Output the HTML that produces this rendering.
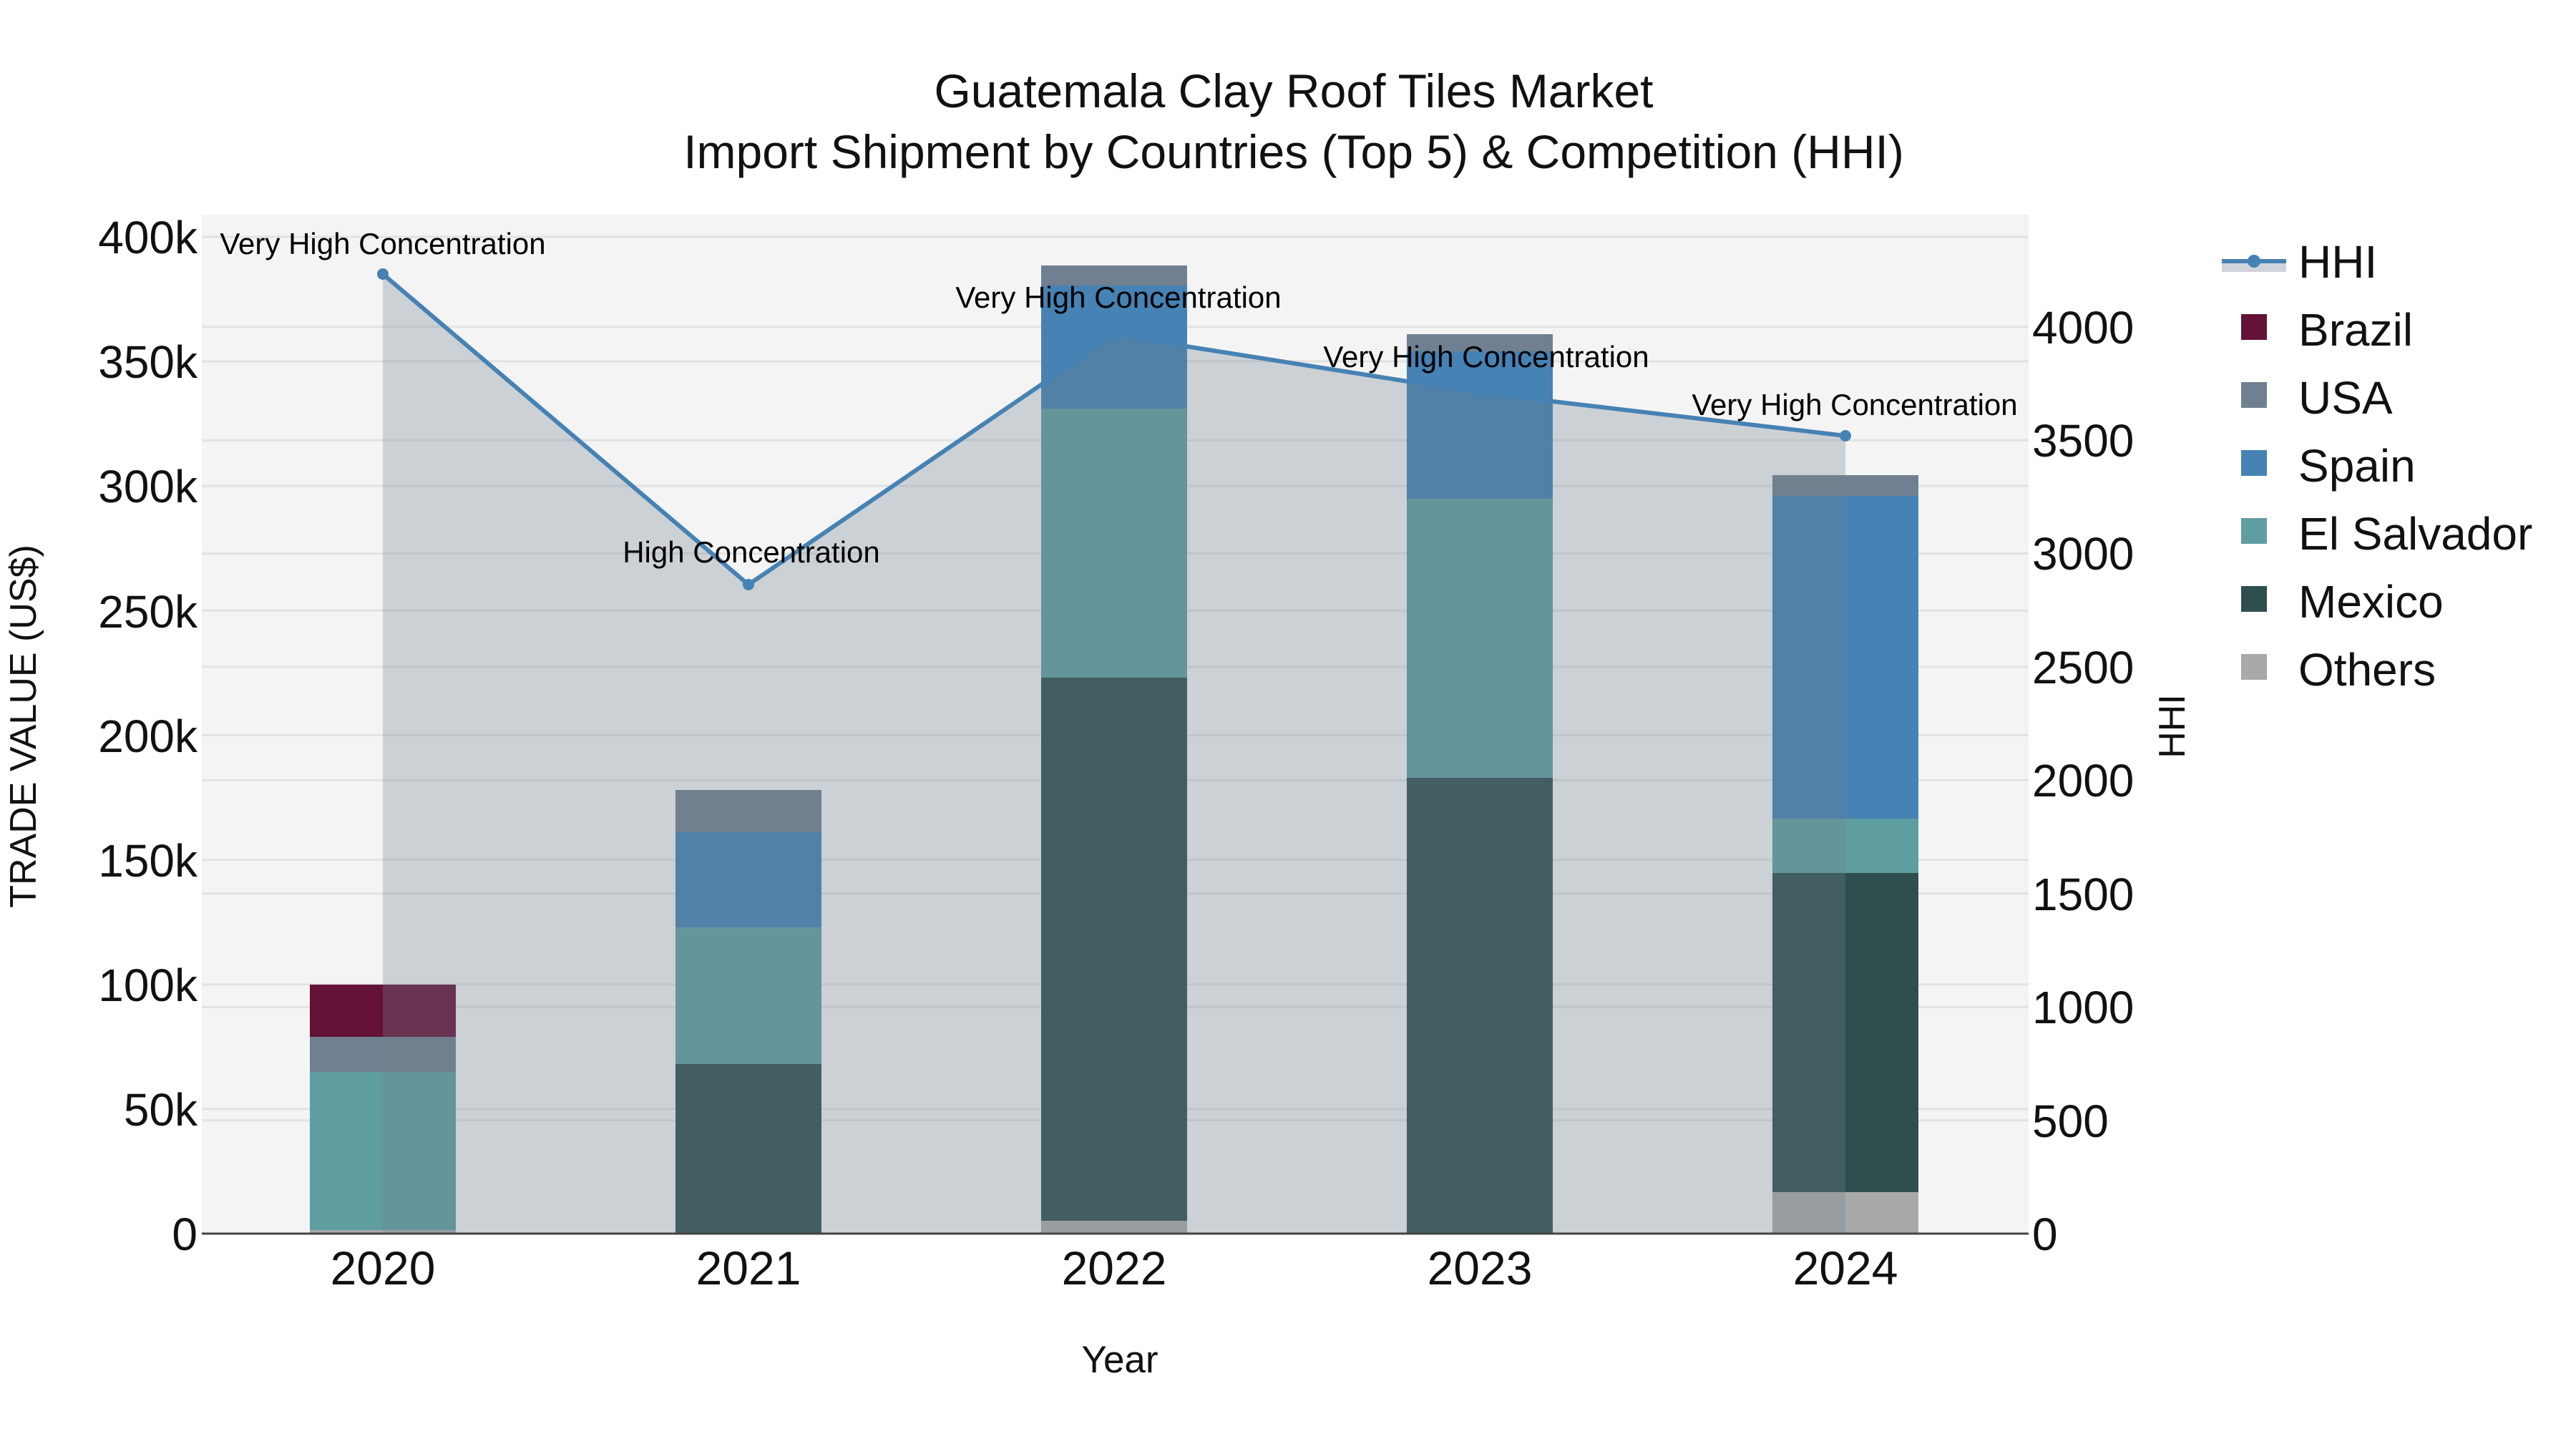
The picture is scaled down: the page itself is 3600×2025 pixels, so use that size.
<!DOCTYPE html>
<html><head><meta charset="utf-8"><style>
html,body{margin:0;padding:0;background:#fff;}
svg{display:block;font-family:"Liberation Sans",sans-serif;}
</style></head><body>
<svg width="3600" height="2025" viewBox="0 0 3600 2025" xmlns="http://www.w3.org/2000/svg">
<rect x="0" y="0" width="3600" height="2025" fill="#fff"/>
<rect x="282" y="300" width="2553" height="1424" fill="#f4f4f4"/>
<g stroke="#e2e2e2" stroke-width="3">
<line x1="282" x2="2835" y1="1549.9" y2="1549.9"/><line x1="282" x2="2835" y1="1375.7" y2="1375.7"/>
<line x1="282" x2="2835" y1="1201.6" y2="1201.6"/><line x1="282" x2="2835" y1="1027.4" y2="1027.4"/>
<line x1="282" x2="2835" y1="853.3" y2="853.3"/><line x1="282" x2="2835" y1="679.1" y2="679.1"/>
<line x1="282" x2="2835" y1="505" y2="505"/><line x1="282" x2="2835" y1="331" y2="331"/>
<line x1="282" x2="2835" y1="1565.6" y2="1565.6"/><line x1="282" x2="2835" y1="1407.2" y2="1407.2"/>
<line x1="282" x2="2835" y1="1248.8" y2="1248.8"/><line x1="282" x2="2835" y1="1090.4" y2="1090.4"/>
<line x1="282" x2="2835" y1="932" y2="932"/><line x1="282" x2="2835" y1="773.6" y2="773.6"/>
<line x1="282" x2="2835" y1="615.2" y2="615.2"/><line x1="282" x2="2835" y1="456.8" y2="456.8"/>
</g>
<g>
<rect x="433" y="1719" width="204" height="5" fill="#a9a9a9"/>
<rect x="433" y="1498" width="204" height="221" fill="#5f9ea0"/>
<rect x="433" y="1449" width="204" height="49" fill="#708090"/>
<rect x="433" y="1376" width="204" height="73" fill="#641237"/>
<rect x="944" y="1487" width="204" height="237" fill="#2f4f4f"/>
<rect x="944" y="1296" width="204" height="191" fill="#5f9ea0"/>
<rect x="944" y="1163" width="204" height="133" fill="#4682b4"/>
<rect x="944" y="1104" width="204" height="59" fill="#708090"/>
<rect x="1455" y="1706" width="204" height="18" fill="#a9a9a9"/>
<rect x="1455" y="947" width="204" height="759" fill="#2f4f4f"/>
<rect x="1455" y="571" width="204" height="376" fill="#5f9ea0"/>
<rect x="1455" y="399" width="204" height="172" fill="#4682b4"/>
<rect x="1455" y="371" width="204" height="28" fill="#708090"/>
<rect x="1966" y="1087" width="204" height="637" fill="#2f4f4f"/>
<rect x="1966" y="697" width="204" height="390" fill="#5f9ea0"/>
<rect x="1966" y="491" width="204" height="206" fill="#4682b4"/>
<rect x="1966" y="467" width="204" height="24" fill="#708090"/>
<rect x="2477" y="1666" width="204" height="58" fill="#a9a9a9"/>
<rect x="2477" y="1220" width="204" height="446" fill="#2f4f4f"/>
<rect x="2477" y="1144" width="204" height="76" fill="#5f9ea0"/>
<rect x="2477" y="693" width="204" height="451" fill="#4682b4"/>
<rect x="2477" y="664" width="204" height="29" fill="#708090"/>
</g>
<polygon points="535,383 1046,817 1557,468 2068,549 2579,609 2579,1724 535,1724" fill="rgba(112,128,144,0.3)"/>
<polyline points="535,383 1046,817 1557,468 2068,549 2579,609" fill="none" stroke="#4682b4" stroke-width="6"/>
<g fill="#4682b4"><circle cx="535" cy="383" r="8"/><circle cx="1046" cy="817" r="8"/><circle cx="1557" cy="468" r="8"/><circle cx="2068" cy="549" r="8"/><circle cx="2579" cy="609" r="8"/></g>
<line x1="282" x2="2835" y1="1724" y2="1724" stroke="#444" stroke-width="3"/>
<g font-size="42" fill="#000" text-anchor="middle">
<text x="535" y="355">Very High Concentration</text>
<text x="1050" y="786">High Concentration</text>
<text x="1563" y="430">Very High Concentration</text>
<text x="2077" y="513">Very High Concentration</text>
<text x="2592" y="580">Very High Concentration</text>
</g>
<g font-size="64" fill="#111" text-anchor="end">
<text x="276" y="1747">0</text><text x="276" y="1573">50k</text><text x="276" y="1399">100k</text>
<text x="276" y="1225">150k</text><text x="276" y="1051">200k</text><text x="276" y="877">250k</text>
<text x="276" y="702">300k</text><text x="276" y="528">350k</text><text x="276" y="354">400k</text>
</g>
<g font-size="64" fill="#111" text-anchor="start">
<text x="2840" y="1747">0</text><text x="2840" y="1589">500</text><text x="2840" y="1430">1000</text>
<text x="2840" y="1272">1500</text><text x="2840" y="1113">2000</text><text x="2840" y="955">2500</text>
<text x="2840" y="796">3000</text><text x="2840" y="638">3500</text><text x="2840" y="480">4000</text>
</g>
<g font-size="66" fill="#111" text-anchor="middle">
<text x="535" y="1795">2020</text><text x="1046" y="1795">2021</text><text x="1557" y="1795">2022</text>
<text x="2068" y="1795">2023</text><text x="2579" y="1795">2024</text>
</g>
<text x="1565" y="1918" font-size="53" text-anchor="middle" fill="#111">Year</text>
<text transform="translate(50,1015) rotate(-90)" font-size="52" text-anchor="middle" fill="#111">TRADE VALUE (US$)</text>
<text transform="translate(3053,1015) rotate(-90)" font-size="52" text-anchor="middle" fill="#111">HHI</text>
<g font-size="66" fill="#111" text-anchor="middle">
<text x="1808" y="150">Guatemala Clay Roof Tiles Market</text>
<text x="1808" y="235">Import Shipment by Countries (Top 5) &amp; Competition (HHI)</text>
</g>
<rect x="3105" y="362" width="90" height="18" fill="#cfd4da"/>
<line x1="3105" x2="3195" y1="365" y2="365" stroke="#4682b4" stroke-width="6"/>
<circle cx="3150" cy="365" r="9" fill="#4682b4"/>
<g>
<rect x="3132" y="439" width="36" height="36" fill="#641237"/>
<rect x="3132" y="534" width="36" height="36" fill="#708090"/>
<rect x="3132" y="629" width="36" height="36" fill="#4682b4"/>
<rect x="3132" y="724" width="36" height="36" fill="#5f9ea0"/>
<rect x="3132" y="819" width="36" height="36" fill="#2f4f4f"/>
<rect x="3132" y="914" width="36" height="36" fill="#a9a9a9"/>
</g>
<g font-size="64" fill="#111">
<text x="3212" y="388">HHI</text><text x="3212" y="483">Brazil</text><text x="3212" y="578">USA</text>
<text x="3212" y="673">Spain</text><text x="3212" y="768">El Salvador</text><text x="3212" y="863">Mexico</text>
<text x="3212" y="958">Others</text>
</g>
</svg>
</body></html>
